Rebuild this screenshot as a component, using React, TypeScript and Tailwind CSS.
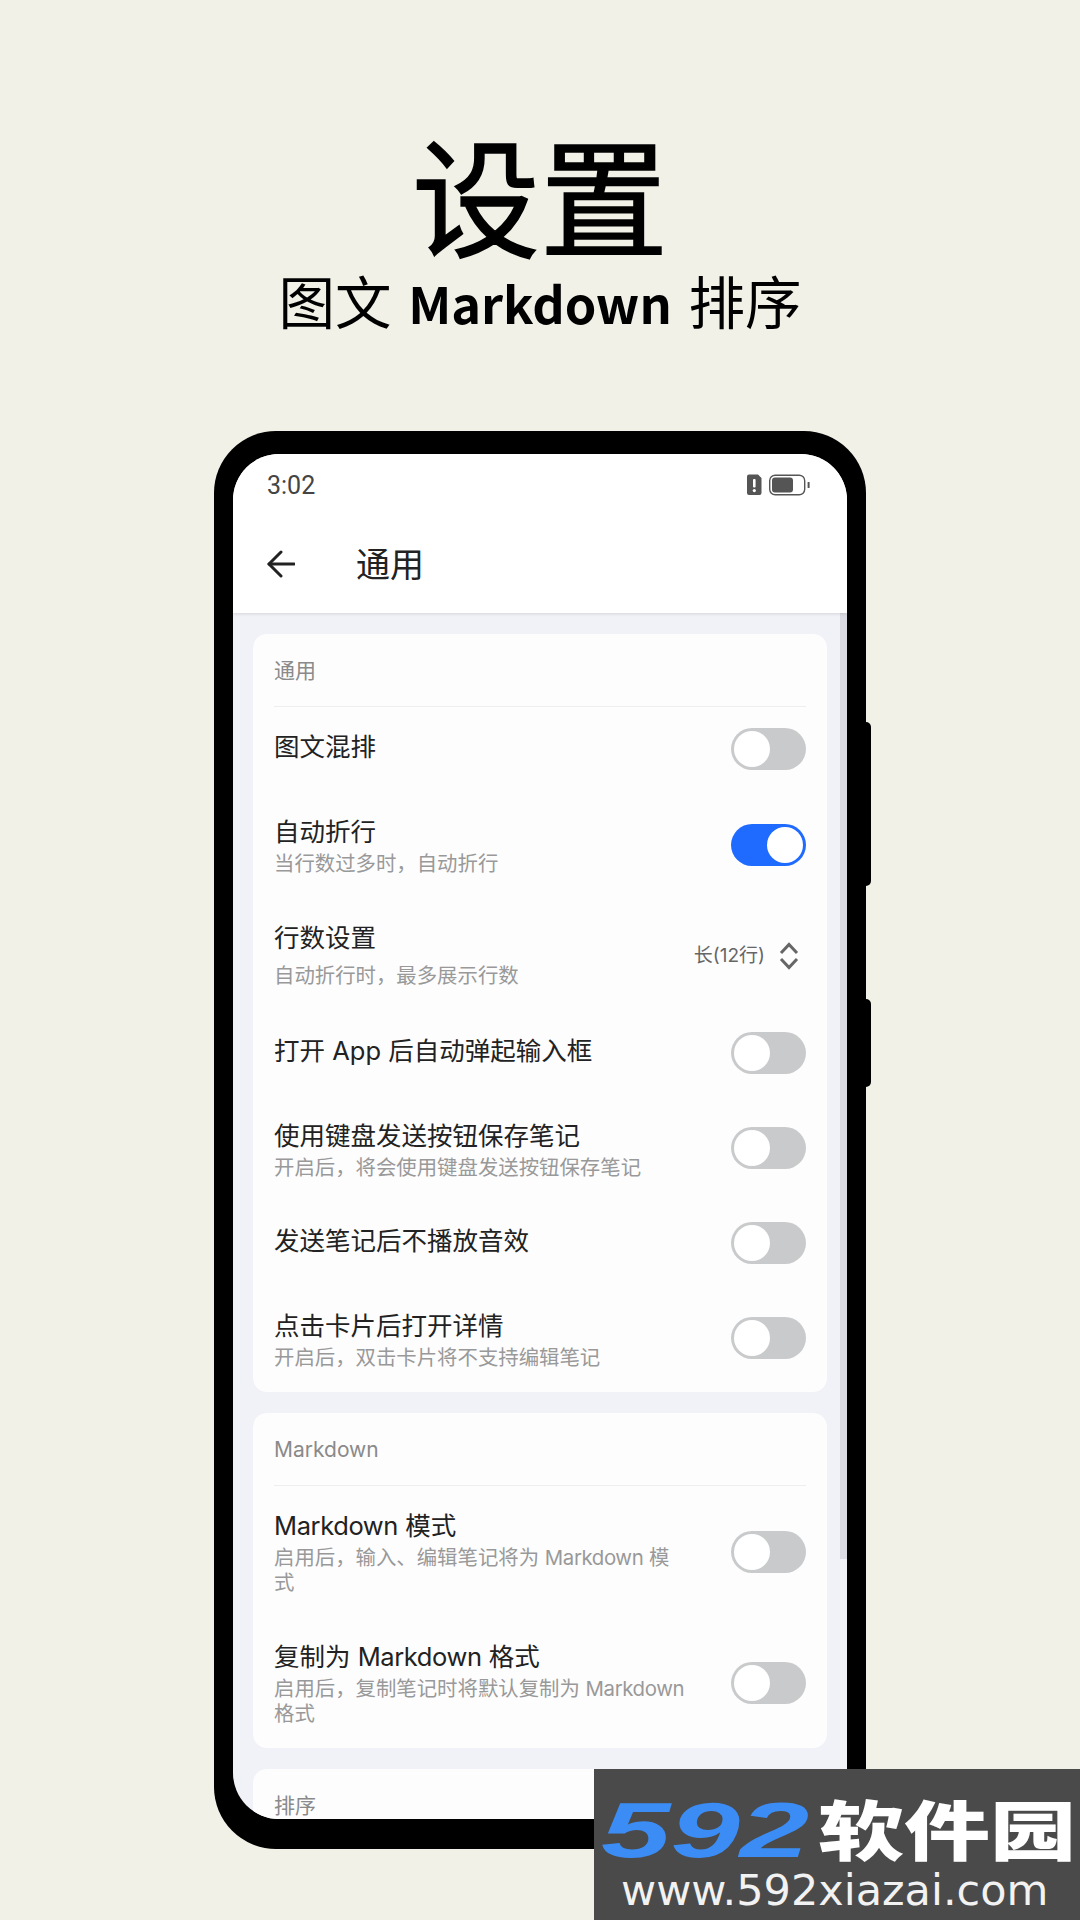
import type { ReactNode } from "react";

const CJK = "font-['Noto_Sans_CJK_SC','Noto_Sans',sans-serif]";
const UI = "font-['Inter','Noto_Sans_CJK_SC',sans-serif]";

const MD = <span className="tracking-[-0.4px]">Markdown</span>;

function Toggle({ on = false }: { on?: boolean }) {
  return (
    <div
      className={[
        "flex h-[42px] w-[75px] shrink-0 items-center rounded-full px-[3px]",
        on ? "justify-end bg-[#1f6bff]" : "justify-start bg-[#c9cacb]",
      ].join(" ")}
    >
      <div className="h-[36px] w-[36px] rounded-full bg-white" />
    </div>
  );
}

interface RowProps {
  title: ReactNode;
  sub?: ReactNode;
  height: string;
  right?: ReactNode;
  textClass?: string;
  subClass?: string;
  on?: boolean;
}

function Row({ title, sub, height, right, textClass = "", subClass = "mt-[2px]", on }: RowProps) {
  return (
    <div className={`flex items-center justify-between ${height}`}>
      <div className={`w-[412px] ${textClass}`}>
        <div className="text-[25.5px] leading-[34px] text-[#222222]">{title}</div>
        {sub && <div className={`text-[20.4px] leading-[25px] text-[#999999] ${subClass}`}>{sub}</div>}
      </div>
      {right ?? <Toggle on={on} />}
    </div>
  );
}

function Card({ label, children }: { label: string; children?: ReactNode }) {
  return (
    <div className="rounded-[14px] bg-[#fdfdfe] pl-[21px] pr-[21px]">
      <div className="flex h-[73px] items-center border-b border-[#eeeeef] pt-[2px] text-[21px] text-[#8a8a8a]">
        {label}
      </div>
      {children}
    </div>
  );
}

function StatusIcons() {
  return (
    <svg width="66" height="24" viewBox="0 0 66 24" fill="none">
      <path d="M2 1.500h9l3.500 3.500v15a2 2 0 0 1-2 2H2a2 2 0 0 1-2-2v-16.500a2 2 0 0 1 2-2z" fill="#555555" />
      <rect x="6" y="6" width="2.600" height="8.500" rx="1" fill="#ffffff" />
      <circle cx="7.300" cy="17.600" r="1.600" fill="#ffffff" />
      <rect x="22.700" y="2.200" width="35" height="19.600" rx="5.500" stroke="#555555" strokeWidth="1.400" />
      <rect x="25" y="4.500" width="21" height="15" rx="3" fill="#555555" />
      <rect x="60.600" y="9" width="2" height="6" rx="0.600" fill="#555555" />
    </svg>
  );
}

function BackArrow() {
  return (
    <svg width="28" height="28" viewBox="0 0 28 28" fill="none" stroke="#222222" strokeWidth="3" strokeLinecap="round" strokeLinejoin="round">
      <path d="M27 14H2" />
      <path d="M14 2 2 14l12 12" />
    </svg>
  );
}

function Chevrons() {
  return (
    <svg width="20" height="28" viewBox="0 0 20 28" fill="none" stroke="#666666" strokeWidth="3">
      <path d="M2 11 10 2.500 18 11" />
      <path d="M2 17l8 8.500 8-8.500" />
    </svg>
  );
}

function Phone() {
  return (
    <div className="relative mx-auto mt-[101px] h-[1418px] w-[652px] rounded-[62px] bg-black px-[19px] pb-[30px] pt-[23px]">
      <div className="absolute right-[-5px] top-[291px] h-[164px] w-[8px] rounded-r-[5px] bg-black" />
      <div className="absolute right-[-5px] top-[568px] h-[88px] w-[8px] rounded-r-[5px] bg-black" />

      <div className={`relative flex h-full flex-col overflow-hidden rounded-[46px] bg-[#f1f1f8] ${UI}`}>
        {/* Status bar and title */}
        <div className="z-10 h-[159px] shrink-0 bg-white shadow-[0_1px_3px_rgba(0,0,0,0.12)]">
          <div className="flex h-[49px] items-end justify-between pl-[34px] pr-[36px]">
            <span className="font-['Roboto',sans-serif] text-[25px] leading-[34px] text-[#444444]">3:02</span>
            <div className="mb-[6px] mr-[-2px]">
              <StatusIcons />
            </div>
          </div>
          <div className="mt-[12px] flex h-[98px] items-center pl-[34px]">
            <BackArrow />
            <span className="ml-[61px] text-[34px] text-[#222222]">通用</span>
          </div>
        </div>

        {/* Settings list */}
        <div className="flex flex-col gap-[21px] px-[20px] pt-[21px]">
          <Card label="通用">
            <Row title="图文混排" height="h-[83px]" textClass="mb-[4px]" />
            <Row title="自动折行" sub="当行数过多时，自动折行" height="h-[110px]" on />
            <Row
              title="行数设置"
              sub="自动折行时，最多展示行数"
              height="h-[112px]"
              textClass="mb-[4px]"
              subClass="mt-[8px]"
              right={
                <div className="flex items-center gap-[14px] pr-[7px]">
                  <span className="text-[19px] text-[#666666]">长(12行)</span>
                  <Chevrons />
                </div>
              }
            />
            <Row title="打开 App 后自动弹起输入框" height="h-[82px]" textClass="mb-[4px]" />
            <Row title="使用键盘发送按钮保存笔记" sub="开启后，将会使用键盘发送按钮保存笔记" height="h-[108px]" textClass="mt-[2px]" />
            <Row title="发送笔记后不播放音效" height="h-[82px]" textClass="mb-[4px]" />
            <Row title="点击卡片后打开详情" sub="开启后，双击卡片将不支持编辑笔记" height="h-[108px]" textClass="mt-[2px]" />
          </Card>

          <Card label="Markdown">
            <Row title={<>{MD} 模式</>} sub={<>启用后，输入、编辑笔记将为 {MD} 模式</>} height="h-[131px]" />
            <Row title={<>复制为 {MD} 格式</>} sub={<>启用后，复制笔记时将默认复制为 {MD} 格式</>} height="h-[131px]" />
          </Card>

          <Card label="排序" />
        </div>

        <div className="absolute right-0 top-[159px] h-[946px] w-[7px] bg-[#dcdce4]" />
      </div>
    </div>
  );
}

function Watermark() {
  return (
    <div className={`absolute bottom-0 right-0 flex h-[151px] w-[486px] flex-col bg-[#4a4a4a] ${CJK}`}>
      <div className="flex h-[101px] items-center pt-[14px]">
        <span className="ml-[7px] mr-[87px] mt-[6px] inline-block w-[130px] origin-left scale-x-[1.6] font-['Liberation_Sans',sans-serif] text-[78px] font-bold italic leading-none text-[#3b8df5]">
          592
        </span>
        <span className="inline-block scale-y-[0.75] text-[86px] font-black leading-none text-white">软件园</span>
      </div>
      <div className="ml-[27px] font-['DejaVu_Sans',sans-serif] text-[43px] leading-[40px] text-[#f2f2f2]">
        www.592xiazai.com
      </div>
    </div>
  );
}

export default function App() {
  return (
    <div className={`relative h-[1920px] w-[1080px] overflow-hidden bg-[#f1f1e7] ${CJK}`}>
      <div className="flex h-[330px] flex-col items-center pt-[129px]">
        <h1 className="h-[138px] shrink-0 text-[128px] font-normal leading-[128px] text-black [-webkit-text-stroke:1.5px_#000]">设置</h1>
        <div className="shrink-0 text-[56.500px] leading-[64px] text-black">
          图文 <span className="mx-[4px] text-[50.500px] font-bold">Markdown</span> 排序
        </div>
      </div>
      <Phone />
      <Watermark />
    </div>
  );
}
